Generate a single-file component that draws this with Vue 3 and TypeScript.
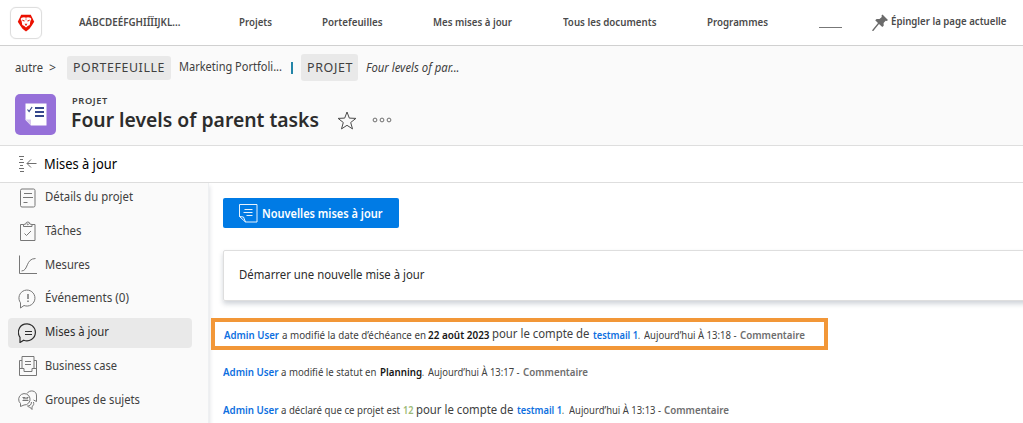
<script setup lang="ts">
import type { Directive } from 'vue'

interface Piece { text: string; width: number; kind: string; gap: number }

// Condenses a label horizontally so that it fills exactly the given width.
const vFit: Directive<HTMLElement, number> = {
  mounted(el, { value }) {
    const natural = el.getBoundingClientRect().width
    el.style.width = `${value}px`
    el.style.transform = `scaleX(${value / natural})`
  },
}

const navItems = [
  { text: 'AÁBCDEÉFGHIÍÏIJKL...', width: 101.5, gap: 58.5 },
  { text: 'Projets', width: 33, gap: 50 },
  { text: 'Portefeuilles', width: 60.5, gap: 50.5 },
  { text: 'Mes mises à jour', width: 79, gap: 51 },
  { text: 'Tous les documents', width: 93.5, gap: 50.5 },
  { text: 'Programmes', width: 61, gap: 51 },
]

const menu = [
  { id: 'details', text: 'Détails du projet', width: 88 },
  { id: 'tasks', text: 'Tâches', width: 36.5 },
  { id: 'metrics', text: 'Mesures', width: 45 },
  { id: 'issues', text: 'Événements (0)', width: 84 },
  { id: 'updates', text: 'Mises à jour', width: 64 },
  { id: 'business', text: 'Business case', width: 72 },
  { id: 'queues', text: 'Groupes de sujets', width: 95 },
]

const updates: Piece[][] = [
  [
    { text: 'Admin User', width: 55, kind: 'link', gap: 2.5 },
    { text: 'a modifié la date d’échéance en', width: 144, kind: 'plain', gap: 2.5 },
    { text: '22 août 2023', width: 61.5, kind: 'strong', gap: 2.5 },
    { text: 'pour le compte de', width: 97.5, kind: 'large', gap: 3 },
    { text: 'testmail 1', width: 45, kind: 'link', gap: 0 },
    { text: '.', width: 2, kind: 'plain', gap: 4.5 },
    { text: 'Aujourd’hui À 13:18 -', width: 92.5, kind: 'plain', gap: 3.5 },
    { text: 'Commentaire', width: 65, kind: 'action', gap: 0 },
  ],
  [
    { text: 'Admin User', width: 55.5, kind: 'link', gap: 2.5 },
    { text: 'a modifié le statut en', width: 95.5, kind: 'plain', gap: 3 },
    { text: 'Planning', width: 42, kind: 'strong', gap: 0 },
    { text: '.', width: 2, kind: 'plain', gap: 4.5 },
    { text: 'Aujourd’hui À 13:17 -', width: 91.5, kind: 'plain', gap: 3.5 },
    { text: 'Commentaire', width: 65, kind: 'action', gap: 0 },
  ],
  [
    { text: 'Admin User', width: 55.5, kind: 'link', gap: 2.5 },
    { text: 'a déclaré que ce projet est', width: 119, kind: 'plain', gap: 2.5 },
    { text: '12', width: 10.5, kind: 'status', gap: 3 },
    { text: 'pour le compte de', width: 97.5, kind: 'large', gap: 3.5 },
    { text: 'testmail 1', width: 45, kind: 'link', gap: 0 },
    { text: '.', width: 2, kind: 'plain', gap: 4.5 },
    { text: 'Aujourd’hui À 13:13 -', width: 92, kind: 'plain', gap: 3 },
    { text: 'Commentaire', width: 65, kind: 'action', gap: 0 },
  ],
]
</script>

<template>
  <div class="page">
    <nav class="topbar">
      <div class="logo">
        <svg width="18" height="18" viewBox="0 0 18 18">
          <path d="M4.200.8h9.600l1.700 3.400 1.700 3.600-2.400 3.700-2.300 3.200L9 17.600l-3.500-2.900-2.300-3.200L.8 7.800l1.700-3.600z" fill="#eb1000" />
          <path d="M4.600 3.700 7 3.200l2 .6 2-.6 2.400.5 1 1.400-1 2-.7 4-2 .9L9 13.500l-1.700-1.500-2-.9-.7-4-1-2z" fill="#fff" />
          <path d="m5.200 5.400 2.600 1.300-.3.900-1.900-.5zm7.600 0-2.600 1.300.3.900 1.900-.5zM7.500 9.800h3L9.500 11v.8h-1V11zM8.700 4.200h.6v2h-.6z" fill="#eb1000" />
        </svg>
      </div>
      <span v-for="item in navItems" :key="item.text" class="nav-cell" :style="{ marginRight: item.gap + 'px' }">
        <span v-fit="item.width" class="t nav-text">{{ item.text }}</span>
      </span>
      <span class="blank"></span>
      <svg class="pin" width="17" height="18" viewBox="0 0 17 18">
        <path d="M10.500.5 16 6l-1.200.9-1.200-.2-2 2.200.1 2.900-1.400 1.200L7 9.900 1.300 17H.3v-1L6 9 3.200 6.200l1.400-1.300 2.900.1L9.800 2.900 9.500 1.600z" fill="#6b6b6b" />
      </svg>
      <span v-fit="115.500" class="t nav-text pin-label">Épingler la page actuelle</span>
    </nav>

    <header class="head">
      <div class="crumbs">
        <span v-fit="28" class="t crumb">autre</span>
        <span v-fit="7" class="t crumb arrow">&gt;</span>
        <span class="tag wide"><span v-fit="92" class="t">PORTEFEUILLE</span></span>
        <span v-fit="103" class="t crumb portfolio">Marketing Portfoli...</span>
        <span class="divider"></span>
        <span class="tag narrow"><span v-fit="46" class="t">PROJET</span></span>
        <span v-fit="93.500" class="t crumb current">Four levels of par...</span>
      </div>
      <div class="title-row">
        <div class="project-icon">
          <svg width="22" height="23" viewBox="0 0 22 23">
            <path d="M.5.5h21v22H6l-5.500-5.500z" fill="#fff" />
            <path d="M.5 16.500H6V22.500z" fill="#d8c9ef" />
            <path d="m2.500 6.500 1.600 2 3-4.500" fill="none" stroke="#35478c" stroke-width="1.200" />
            <path d="M10 5h9M10 9h9M10 13h9" stroke="#35478c" stroke-width="2" />
          </svg>
        </div>
        <div class="title-text">
          <span v-fit="36" class="t overline">PROJET</span>
          <h1 v-fit="248" class="t">Four levels of parent tasks</h1>
        </div>
        <svg class="star" width="20" height="19" viewBox="0 0 20 19">
          <path d="m10 1 2.300 6.100 6.600.3-5.200 4.100 1.800 6.400L10 14.300l-5.500 3.600 1.800-6.400-5.200-4.100 6.600-.3z" fill="none" stroke="#4b4b4b" stroke-width="1" />
        </svg>
        <svg class="more" width="20" height="6" viewBox="0 0 20 6">
          <g fill="none" stroke="#6e6e6e"><circle cx="3" cy="3" r="1.900" /><circle cx="10" cy="3" r="1.900" /><circle cx="17" cy="3" r="1.900" /></g>
        </svg>
      </div>
    </header>

    <div class="section">
      <svg width="18" height="18" viewBox="0 0 18 18" fill="none" stroke="#6e6e6e">
        <path d="M0 1.500h5M1 4.500h3M0 7.500h5M1 10.500h3M0 13.500h5M1 16.500h4M8 8.500h9.500M12 4.500l-4 4 4 4" />
      </svg>
      <span v-fit="73" class="t section-title">Mises à jour</span>
    </div>

    <div class="body">
      <aside class="side">
        <div v-for="entry in menu" :key="entry.id" class="entry" :class="{ active: entry.id === 'updates' }">
          <svg class="icon" width="20" height="20" viewBox="0 0 20 20" fill="none" stroke="currentColor">
            <template v-if="entry.id === 'details'">
              <rect x="2.500" y="1" width="14.500" height="18" rx="1.500" />
              <path d="M6 5.500h8M5 9.500h10M5.500 14.500h4" />
            </template>
            <template v-else-if="entry.id === 'tasks'">
              <path d="M5.500 3.500h-3v16H17v-16h-3M5.500 5.500v-2l2.300-.5a2 2 0 0 1 4 0l2.200.5v2zM6.500 12.500l2 2 4.500-4.500" />
              <circle cx="9.800" cy="3.300" r=".5" />
            </template>
            <template v-else-if="entry.id === 'metrics'">
              <path d="M1.500.5v18H19M3.500 16c7 0 4-12.500 14-12.500" />
            </template>
            <template v-else-if="entry.id === 'issues'">
              <path d="M2.500 19v-5.200a8 8 0 1 1 3.500 2.700z" />
              <path d="M10 5v5M10 11.500V13" stroke-width="1.500" />
            </template>
            <template v-else-if="entry.id === 'updates'">
              <path d="M2 19.500v-5.200a8.500 8.500 0 1 1 3.700 2.900z" stroke-width="1.200" />
              <path d="M7 8.500h7M7 11.500h7" stroke-width="1.200" />
            </template>
            <template v-else-if="entry.id === 'business'">
              <path d="M4 4.500H1.500v15h17v-15H16M4 13V.5h12V13M1.500 12.500H6v3h8v-3h4.500M7 5.500h6M7 8.500h6" />
            </template>
            <template v-else>
              <path d="M9 3.500C11.500-.7 19 .3 18.500 6v5.500l-3-1.500M2.500 16.500v-3A5.700 5.700 0 1 1 6 15zM13.500 12c0 3-2 4-4 4 1.500 1.500 3.200 1 4.500 3.500v-3c1.800-1 2-2.500 1.500-4.500" />
              <path d="M4.500 7.500h3M8.500 7.500h2M4.500 10.500h6M5 8.800h5" />
            </template>
          </svg>
          <span v-fit="entry.width" class="t entry-text">{{ entry.text }}</span>
        </div>
      </aside>

      <main class="main">
        <button class="primary" type="button">
          <svg width="19" height="19" viewBox="0 0 19 19" fill="none" stroke="#fff">
            <path d="M.5.500h17.500V18H6.500L.5 12.500zM.5 12.500l4 .5 2 5M5.500 5.500h8M4.500 8.500h9M7.500 11.500h6" stroke-opacity=".9" />
          </svg>
          <span v-fit="120.500" class="t primary-text">Nouvelles mises à jour</span>
        </button>

        <div class="composer"><span v-fit="185.500" class="t">Démarrer une nouvelle mise à jour</span></div>

        <div v-for="(row, r) in updates" :key="r" class="update" :class="{ framed: r === 0 }">
          <span v-for="(piece, i) in row" :key="i" class="piece" :style="{ marginRight: piece.gap + 'px' }">
            <span v-fit="piece.width" class="t" :class="piece.kind">{{ piece.text }}</span>
          </span>
        </div>
      </main>
    </div>
  </div>
</template>

<style>
html, body { margin: 0; overflow: hidden; background: #fff; }
</style>

<style scoped>
.page {
  width: 1023px; height: 423px; overflow: hidden; background: #fff;
  font-family: "Noto Sans", "Open Sans", sans-serif; font-size: 12.500px; color: #404040;
}
.page * { box-sizing: border-box; }
.t { display: inline-block; flex: none; white-space: nowrap; transform-origin: 0 50%; line-height: 18px; }

.topbar { height: 46px; display: flex; align-items: center; border-bottom: 1px solid #d0d0d0; padding-left: 10px; }
.logo {
  width: 32px; height: 32px; margin-right: 37px; flex: none; display: flex; align-items: center; justify-content: center;
  border: 1px solid #dedede; border-radius: 6px; box-shadow: 0 0 1px #ddd;
}
.nav-cell { display: flex; flex: none; margin-top: -2px; }
.nav-text { font-size: 11px; font-weight: 600; color: #4b4b4b; }
.blank { width: 23px; height: 1px; background: #777; margin: 9px 30px 0 0; flex: none; }
.pin { flex: none; margin-right: 1.500px; }
.pin-label { margin-top: -3px; }

.head { height: 100px; background: #fafafa; border-bottom: 1px solid #dedede; padding: 8px 0 0 15px; }
.crumbs { display: flex; align-items: center; height: 27px; }
.arrow { margin: 1px 11px 0 6px; }
.tag { display: flex; align-items: center; padding-left: 6px; border-radius: 3px; background: #e9e9e9; letter-spacing: .6px; flex: none; font-size: 12.300px; }
.wide { width: 104px; height: 24px; margin-right: 8px; }
.narrow { width: 57px; height: 27px; margin-right: 8px; }
.portfolio { margin-top: -2px; }
.divider { width: 2px; height: 12px; background: #2385a8; margin: 1px 8px 0 9px; flex: none; }
.current { font-style: italic; }
.title-row { display: flex; align-items: flex-start; padding-top: 13px; }
.project-icon { width: 41px; height: 41px; border-radius: 5px; background: #9670d9; display: flex; align-items: center; justify-content: center; margin-right: 15px; }
.title-text { width: 248px; height: 42px; display: flex; flex-direction: column; align-items: flex-start; }
.t.overline { font-size: 8.800px; font-weight: 600; letter-spacing: .6px; line-height: 14px; margin-left: 1px; }
h1 { margin: -2px 0 0; font-size: 20.500px; font-weight: 600; color: #2c2c2c; }
h1.t { line-height: 26px; }
.star { margin: 17px 0 0 18px; }
.more { margin: 23px 0 0 15px; }

.section { height: 37px; display: flex; align-items: center; padding-left: 19px; border-bottom: 1px solid #dedede; }
.section-title { font-size: 13.500px; color: #000; margin: -1px 0 0 7px; }

.body { display: flex; height: 240px; }
.side { width: 209px; flex: none; background: #fafafa; border-right: 1px solid #eef0f2; box-shadow: 1px 3px 4px rgba(40, 60, 80, .14); }
.entry { display: flex; align-items: center; width: 184px; height: 30px; margin: 0 0 3.800px 8px; padding: 0 0 3px 10px; border-radius: 4px; }
.icon { flex: none; margin: 2px 7px 0 0; color: #777; }
.entry-text { margin-top: 1px; }
.active { background: #e9e9e9; color: #2c2c2c; }
.active .icon { color: #2c2c2c; }

.main { flex: 1; min-width: 0; padding: 15px 0 0 14px; }
.primary { display: flex; align-items: center; width: 176px; height: 30px; padding: 0 0 0 16px; border: 0; border-radius: 2px; background: #007be5; color: #fff; font: 600 12.300px "Noto Sans", sans-serif; }
.primary svg { margin-right: 4px; flex: none; }
.primary-text { margin-top: 1px; }
.composer { width: 810px; height: 51px; margin-top: 22px; padding: 15px 0 0 15px; border: 1px solid #dedede; border-radius: 2px; color: #2c2c2c; box-shadow: 0 3px 5px rgba(40, 60, 80, .22); }

.update { height: 32px; display: flex; align-items: center; font-size: 10.800px; }
.framed { width: 617px; margin: 17px 0 6px -12px; border: 4px solid #f29738; padding: 1px 0 0 9px; }
.update + .update { margin-bottom: 6px; }
.piece { display: flex; flex: none; }
.link { color: #0d6fe0; font-weight: 600; }
.strong { color: #161616; font-weight: 600; }
.large { font-size: 12.500px; margin-top: -1px; }
.action { color: #6e6e6e; font-weight: 600; }
.status { color: #9dba76; font-weight: 600; }
</style>
